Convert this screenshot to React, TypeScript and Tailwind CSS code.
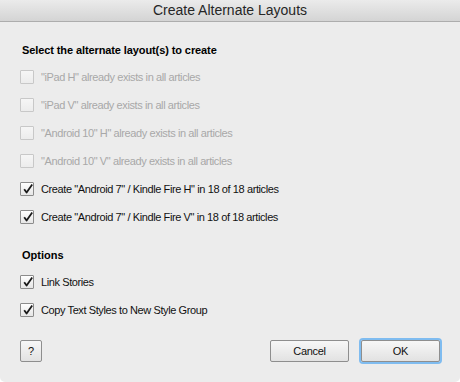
import React from "react";

const font = { fontFamily: '"Liberation Sans", Arial, sans-serif' };

function Box({ checked, disabled }: { checked?: boolean; disabled?: boolean }) {
  return (
    <div
      className={`relative w-[14px] h-[14px] shrink-0 border rounded-[1px] ${
        disabled ? "border-[#c8c8c8] bg-gradient-to-b from-[#f6f6f6] to-[#ececec]" : "border-[#8c8c8c] bg-gradient-to-b from-[#ffffff] to-[#e6e6e6]"
      }`}
    >
      {checked && (
        <svg className="absolute left-[1px] top-[0px]" width="12" height="12" viewBox="0 0 12 12">
          <path d="M2.2 6.2 L4.6 9.6 L10.2 1.6" fill="none" stroke="#1a1a1a" strokeWidth="1.8" strokeLinejoin="round" />
        </svg>
      )}
    </div>
  );
}

function Row({ label, checked, disabled }: { label: string; checked?: boolean; disabled?: boolean }) {
  return (
    <div className="flex items-center h-[28px] gap-[7px]">
      <Box checked={checked} disabled={disabled} />
      <span className={`text-[11px] tracking-[-0.4px] ${disabled ? "text-[#a8a8a8]" : "text-[#111]"}`}>{label}</span>
    </div>
  );
}

function Btn({ children, w, focus }: { children: React.ReactNode; w: string; focus?: boolean }) {
  return (
    <div
      className={`${w} h-[22px] flex items-center justify-center rounded-[2px] border border-[#8e8e8e] bg-gradient-to-b from-[#f7f7f7] to-[#e2e2e2] text-[11px] tracking-[-0.3px] text-[#111] ${
        focus ? "shadow-[0_0_0_2px_#7fbcf0]" : ""
      }`}
    >
      {children}
    </div>
  );
}

export default function App() {
  return (
    <div className="w-[460px] h-[382px] bg-[#ececec] flex flex-col rounded-b-[5px] overflow-hidden" style={font}>
      <div className="h-[22px] shrink-0 bg-gradient-to-b from-[#ebebeb] to-[#d4d4d4] border-b border-[#adadad] flex items-center justify-center text-[14px] text-[#262626]">
        Create Alternate Layouts
      </div>
      <div className="flex flex-col pl-[20px] pt-[21px]">
        <div className="pl-[2px] text-[11px] tracking-[-0.1px] font-bold text-black h-[14px] leading-[14px]">
          Select the alternate layout(s) to create
        </div>
        <div className="flex flex-col mt-[6px]">
          <Row disabled label={'"iPad H" already exists in all articles'} />
          <Row disabled label={'"iPad V" already exists in all articles'} />
          <Row disabled label={'"Android 10" H" already exists in all articles'} />
          <Row disabled label={'"Android 10" V" already exists in all articles'} />
          <Row checked label={'Create "Android 7" / Kindle Fire H" in 18 of 18 articles'} />
          <Row checked label={'Create "Android 7" / Kindle Fire V" in 18 of 18 articles'} />
        </div>
        <div className="pl-[2px] mt-[17px] text-[11px] font-bold text-black h-[14px] leading-[14px]">Options</div>
        <div className="flex flex-col mt-[6px]">
          <Row checked label="Link Stories" />
          <Row checked label="Copy Text Styles to New Style Group" />
        </div>
      </div>
      <div className="mt-auto mb-[20px] px-[20px] flex items-center">
        <Btn w="w-[22px]">?</Btn>
        <div className="ml-auto flex gap-[12px]">
          <Btn w="w-[79px]">Cancel</Btn>
          <Btn w="w-[79px]" focus>
            OK
          </Btn>
        </div>
      </div>
    </div>
  );
}
